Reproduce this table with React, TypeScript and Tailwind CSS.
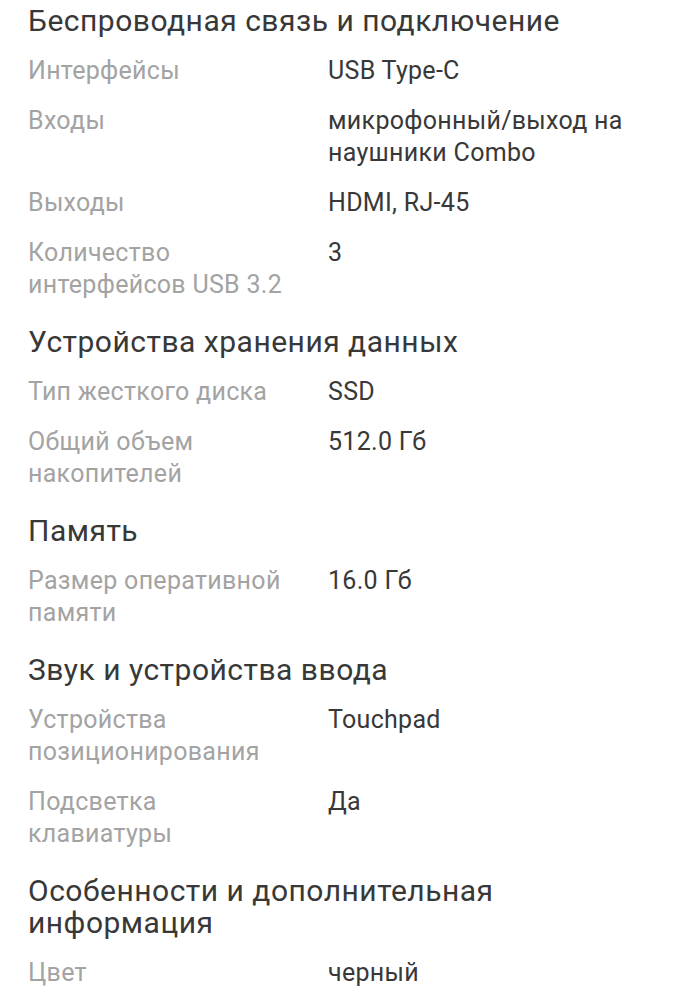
const SECTIONS: { title: string; rows: [string, string][] }[] = [
  {
    title: "Беспроводная связь и подключение",
    rows: [
      ["Интерфейсы", "USB Type-C"],
      ["Входы", "микрофонный/выход на наушники Combo"],
      ["Выходы", "HDMI, RJ-45"],
      ["Количество интерфейсов USB 3.2", "3"],
    ],
  },
  {
    title: "Устройства хранения данных",
    rows: [
      ["Тип жесткого диска", "SSD"],
      ["Общий объем накопителей", "512.0 Гб"],
    ],
  },
  {
    title: "Память",
    rows: [["Размер оперативной памяти", "16.0 Гб"]],
  },
  {
    title: "Звук и устройства ввода",
    rows: [
      ["Устройства позиционирования", "Touchpad"],
      ["Подсветка клавиатуры", "Да"],
    ],
  },
  {
    title: "Особенности и дополнительная информация",
    rows: [["Цвет", "черный"]],
  },
]

export default function App() {
  return (
    <div className="min-h-screen bg-white pl-[28px] pr-[28px] pt-[5px] font-['Roboto',sans-serif]">
      <div className="flex flex-col gap-[25px]">
        {SECTIONS.map((s) => (
          <section key={s.title} className="flex flex-col gap-[18px]">
            <h2 className="text-[30px] leading-[32px] tracking-[0.5px] font-normal text-[#383838]">{s.title}</h2>
            <div className="flex flex-col gap-[18px]">
              {s.rows.map(([label, value]) => (
                <div key={label} className="flex text-[25px] leading-[32px] tracking-[0.3px]">
                  <div className="w-[265px] shrink-0 text-[#a3a3a3]">{label}</div>
                  <div className="ml-[35px] flex-1 text-[#383838]">{value}</div>
                </div>
              ))}
            </div>
          </section>
        ))}
      </div>
    </div>
  )
}
